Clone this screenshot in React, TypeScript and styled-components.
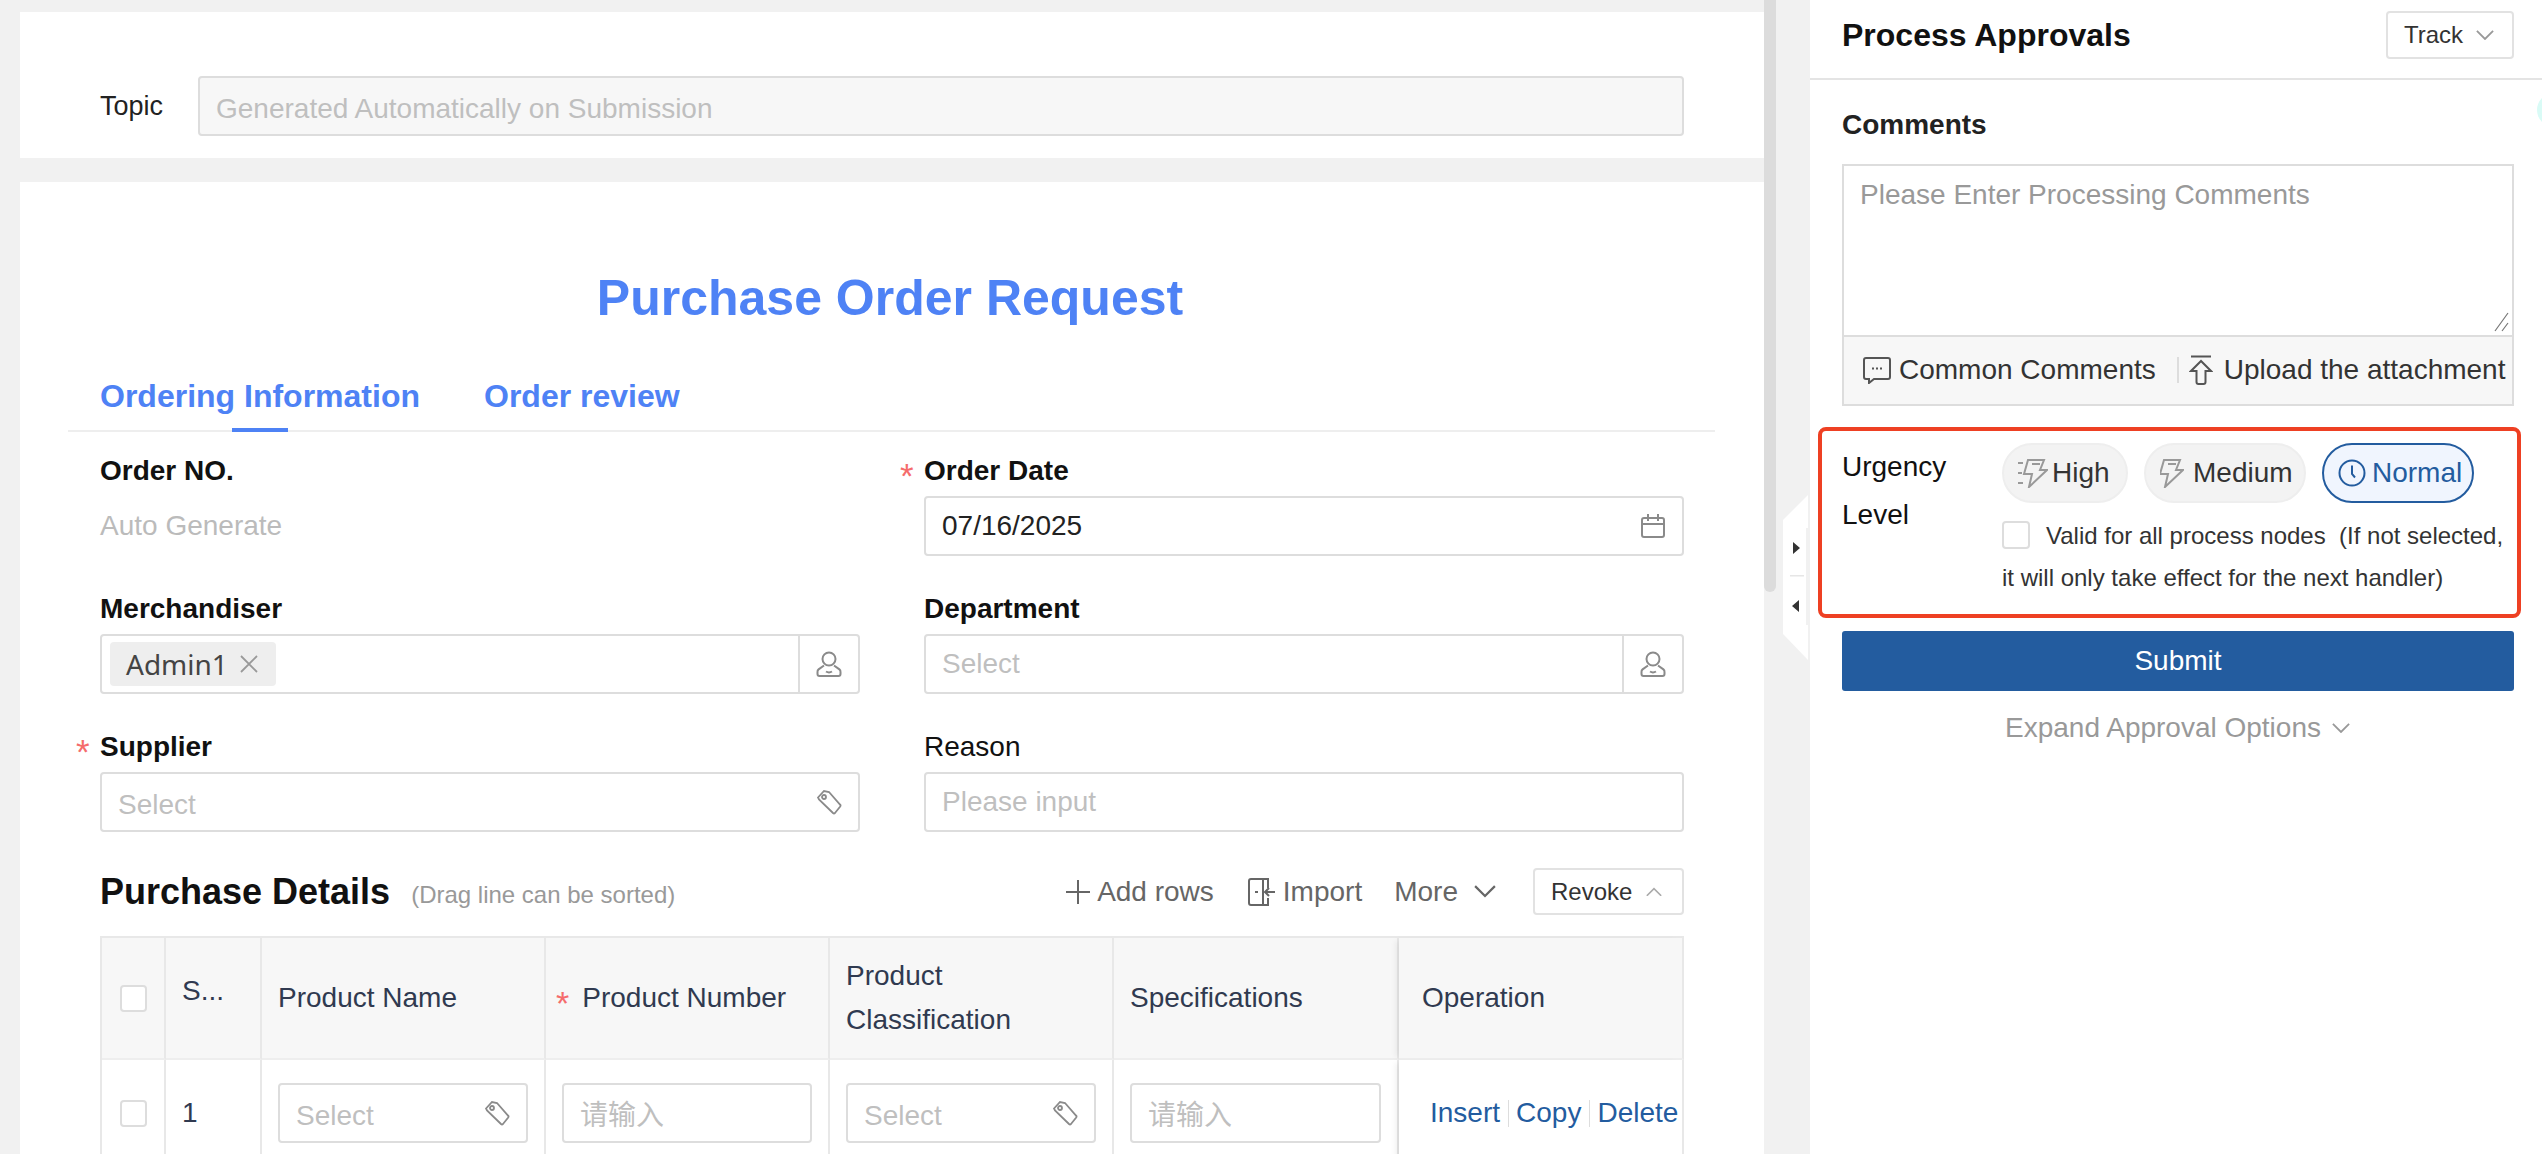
import React from 'react'
import styled, { createGlobalStyle } from 'styled-components'

const Global = createGlobalStyle`
  html, body { margin: 0; padding: 0; height: 100%; overflow: hidden; background: #fff; }
  body, #root { font-family: "Liberation Sans", "Noto Sans CJK SC", Arial, sans-serif; font-size: 28px; color: #222; }
  * { box-sizing: border-box; }
`

const Page = styled.div`
  display: flex;
  width: 2542px;
  height: 1154px;
  overflow: hidden;
  position: relative;
`
const Main = styled.main`
  position: relative;
  flex: 0 0 1810px;
  height: 1154px;
  overflow: hidden;
  padding: 12px 46px 0 20px;
  background: #f1f1f1;
`
const Scrollbar = styled.div`
  position: absolute;
  left: 1764px;
  top: 0;
  width: 12px;
  height: 592px;
  background: #dcdcdc;
  border-radius: 0 0 6px 6px;
`
const CollapseHandle = styled.svg`
  position: absolute;
  left: 1783px;
  top: 495px;
`
const TopicCard = styled.section`
  display: flex;
  align-items: flex-start;
  height: 146px;
  padding: 64px 80px 0 80px;
  background: #fff;
`
const TopicLabel = styled.label`
  flex: 0 0 98px;
  height: 60px;
  line-height: 60px;
  font-size: 27px;
  color: #222;
`
const FormCard = styled.section`
  margin-top: 24px;
  min-height: 1100px;
  padding-top: 86px;
  background: #fff;
`
const Title = styled.h1`
  margin: 0;
  padding-right: 4px;
  height: 60px;
  line-height: 60px;
  text-align: center;
  font-size: 50px;
  font-weight: 700;
  color: #4e82f5;
`
const Tabs = styled.div`
  display: flex;
  gap: 64px;
  height: 70px;
  margin: 34px 49px 0 48px;
  padding-left: 32px;
  border-bottom: 2px solid #eee;
`
const Tab = styled.div<{ $active?: boolean }>`
  position: relative;
  height: 68px;
  line-height: 68px;
  font-size: 32px;
  font-weight: 700;
  color: #4e82f5;
  &::after {
    content: '';
    display: ${p => (p.$active ? 'block' : 'none')};
    position: absolute;
    left: 50%;
    bottom: -2px;
    width: 56px;
    height: 4px;
    margin-left: -28px;
    background: #4e82f5;
  }
`
const FormBody = styled.div`
  width: 1584px;
  margin: 17px 0 0 80px;
`
const FormGrid = styled.div`
  display: grid;
  grid-template-columns: 760px 760px;
  column-gap: 64px;
  grid-auto-rows: 138px;
`
const FormItem = styled.div`
  position: relative;
`
const Label = styled.div<{ $plain?: boolean }>`
  position: relative;
  height: 40px;
  line-height: 43px;
  margin-bottom: 7px;
  font-weight: ${p => (p.$plain ? 400 : 700)};
  color: #111;
`
const Star = styled.span`
  position: absolute;
  left: -24px;
  top: 5px;
  font-size: 35px;
  font-weight: 400;
  color: #f56c6c;
`
const Field = styled.div<{ $disabled?: boolean; $flex?: boolean }>`
  display: flex;
  align-items: center;
  justify-content: space-between;
  flex: ${p => (p.$flex ? 1 : 'none')};
  height: 60px;
  padding: 0 16px;
  border: 2px solid #ddd;
  border-radius: 4px;
  background: ${p => (p.$disabled ? '#f7f7f7' : '#fff')};
  color: #222;
`
const Placeholder = styled.span<{ $low?: boolean }>`
  position: relative;
  top: ${p => (p.$low ? 3 : 0)}px;
  color: #bfbfbf;
`
const StaticValue = styled.div`
  height: 60px;
  line-height: 60px;
  color: #bbb;
`
const PickerField = styled(Field)`
  padding: 0;
`
const PickerBody = styled.div`
  display: flex;
  align-items: center;
  flex: 1;
  height: 100%;
  padding: 0 16px;
`
const PickerButton = styled.div`
  display: flex;
  align-items: center;
  justify-content: center;
  flex: 0 0 60px;
  height: 100%;
  border-left: 2px solid #ddd;
`
const UserTag = styled.span`
  display: inline-flex;
  align-items: center;
  gap: 12px;
  height: 44px;
  margin-left: -8px;
  padding: 0 18px 0 16px;
  border-radius: 4px;
  background: #eee;
  font-family: "Noto Sans", sans-serif;
  font-size: 28px;
  color: #444;
`
const SectionHead = styled.div`
  display: flex;
  align-items: center;
  height: 47px;
  margin-top: 5px;
`
const SectionTitle = styled.h2`
  margin: 0;
  font-size: 36px;
  font-weight: 700;
  color: #111;
`
const SectionNote = styled.span`
  margin: 6px 0 0 21px;
  font-size: 24px;
  color: #999;
`
const Toolbar = styled.div`
  display: flex;
  align-items: center;
  margin-left: auto;
`
const ToolAction = styled.span<{ $gap: number; $inner?: number }>`
  display: inline-flex;
  align-items: center;
  gap: ${p => p.$inner ?? 7}px;
  margin-right: ${p => p.$gap}px;
  color: #666;
`
const OutlineButton = styled.button<{ $width?: number }>`
  display: inline-flex;
  align-items: center;
  justify-content: space-between;
  width: ${p => (p.$width ? `${p.$width}px` : 'auto')};
  height: 47px;
  padding: 0 20px 0 16px;
  border: 2px solid #e2e2e2;
  border-radius: 4px;
  background: #fff;
  font: inherit;
  font-size: 24px;
  color: #333;
`
const Table = styled.div`
  display: grid;
  grid-template-columns: 64px 96px 284px 284px 284px 285px 285px;
  grid-template-rows: 122px 108px;
  margin-top: 21px;
  border-top: 2px solid #e8e8e8;
  border-left: 2px solid #e8e8e8;
`
const Cell = styled.div<{ $head?: boolean; $center?: boolean; $fixed?: boolean; $raised?: boolean }>`
  display: flex;
  align-items: center;
  justify-content: ${p => (p.$center ? 'center' : 'flex-start')};
  padding: ${p => (p.$center ? '0' : p.$fixed ? '0 0 0 23px' : '0 16px')};
  padding-bottom: ${p => (p.$raised ? '14px' : undefined)};
  border-right: 2px solid #e8e8e8;
  border-bottom: 2px solid #eee;
  background: ${p => (p.$head ? '#f7f7f7' : '#fff')};
  color: #303a50;
  line-height: 44px;
  box-shadow: ${p => (p.$fixed ? '-6px 0 6px -3px rgba(0,0,0,.07)' : 'none')};
`
const RowStar = styled.span`
  margin: 10px 13px 0 -6px;
  color: #f56c6c;
  font-size: 34px;
`
const CellField = styled(Field)`
  width: 100%;
`
const OpRow = styled.div`
  display: flex;
  align-items: center;
  padding-left: 8px;
`
const OpLink = styled.a`
  color: #235c9f;
`
const OpDivider = styled.span`
  width: 1px;
  height: 27px;
  margin: 0 7px 0 8px;
  background: #ddd;
`
const Checkbox = styled.span`
  display: inline-block;
  width: 27px;
  height: 27px;
  border: 2px solid #ddd;
  border-radius: 4px;
  background: #fff;
`

const Aside = styled.aside`
  position: relative;
  flex: 1;
  height: 1154px;
  background: #fff;
`
const PanelHead = styled.header`
  display: flex;
  align-items: center;
  justify-content: space-between;
  height: 80px;
  padding: 0 28px 8px 32px;
  border-bottom: 2px solid #e4e4e4;
`
const PanelTitle = styled.h2`
  margin: 0;
  font-size: 32px;
  font-weight: 700;
  color: #111;
`
const TrackButton = styled(OutlineButton)`
  width: 128px;
  height: 48px;
  padding: 0 18px 0 16px;
`
const PanelBody = styled.div`
  padding: 25px 28px 0 32px;
`
const CommentsLabel = styled.div`
  height: 40px;
  line-height: 40px;
  margin-bottom: 19px;
  font-weight: 700;
  color: #222;
`
const CommentBox = styled.div`
  height: 242px;
  border: 2px solid #ddd;
`
const CommentInput = styled.div`
  position: relative;
  height: 169px;
  padding: 9px 16px;
  color: #999;
  line-height: 40px;
`
const ResizeGrip = styled.svg`
  position: absolute;
  right: 2px;
  bottom: 2px;
`
const CommentTools = styled.div`
  display: flex;
  align-items: center;
  height: 69px;
  padding: 0 0 2px 19px;
  border-top: 2px solid #ddd;
  background: #f7f7f7;
  color: #333;
`
const CommentTool = styled.span`
  display: inline-flex;
  align-items: center;
  gap: 8px;
`
const ToolDivider = styled.span`
  width: 2px;
  height: 26px;
  margin: 0 10px 0 21px;
  background: #ddd;
`
const UploadTool = styled(CommentTool)`
  gap: 11px;
`
const UrgencyRow = styled.div`
  display: flex;
  margin-top: 37px;
`
const UrgencyLabel = styled.div`
  flex: 0 0 160px;
  width: 160px;
  padding-right: 60px;
  line-height: 48px;
  color: #111;
`
const UrgencyOptions = styled.div`
  flex: 1;
  min-width: 0;
`
const Chips = styled.div`
  display: flex;
  gap: 16px;
`
const Chip = styled.span<{ $active?: boolean; $width: number; $gap: number }>`
  display: inline-flex;
  align-items: center;
  gap: ${p => p.$gap}px;
  width: ${p => p.$width}px;
  height: 60px;
  padding-left: 14px;
  border: 2px solid ${p => (p.$active ? '#235c9f' : '#eee')};
  border-radius: 30px;
  background: ${p => (p.$active ? '#f0f5fe' : '#f3f3f3')};
  color: ${p => (p.$active ? '#235c9f' : '#333')};
`
const ScopeNote = styled.div`
  margin-top: 12px;
  font-size: 24px;
  line-height: 42px;
  color: #333;
  white-space: nowrap;
`
const ScopeCheck = styled(Checkbox)`
  width: 28px;
  height: 28px;
  margin-right: 16px;
  vertical-align: middle;
  position: relative;
  top: -3px;
`
const SubmitButton = styled.button`
  display: block;
  width: 100%;
  height: 60px;
  margin-top: 32px;
  border: 0;
  border-radius: 3px;
  background: #235c9f;
  color: #fff;
  font: inherit;
`
const ExpandLink = styled.div`
  display: flex;
  align-items: center;
  justify-content: center;
  gap: 11px;
  height: 40px;
  margin-top: 17px;
  padding-right: 1px;
  color: #999;
`
const Highlight = styled.div`
  position: absolute;
  left: 8px;
  top: 427px;
  width: 703px;
  height: 191px;
  border: 4px solid #ee4023;
  border-radius: 8px;
  pointer-events: none;
`
const Bubble = styled.div`
  position: absolute;
  right: -29px;
  top: 93px;
  width: 34px;
  height: 34px;
  border-radius: 50%;
  background: #d9fbf6;
`

const CalendarIcon = () => (
  <svg width="26" height="26" viewBox="0 0 26 26" fill="none" stroke="#8a8a8a" strokeWidth="2">
    <rect x="2" y="5" width="22" height="19" rx="2" />
    <path d="M2 11h22M8 1v7M18 1v7" />
  </svg>
)
const UserIcon = () => (
  <svg width="26" height="26" viewBox="0 0 26 26" fill="none" stroke="#8a8a8a" strokeWidth="2">
    <circle cx="13" cy="8" r="6.5" />
    <path d="M8 14.5 2.6 18.4A3 3 0 0 0 1.5 21v2a2 2 0 0 0 2 2h19a2 2 0 0 0 2-2v-2a3 3 0 0 0-1.1-2.600L18 14.500M10 20.500c2 1.300 4 1.300 6 0" />
  </svg>
)
const TagIcon = () => (
  <svg width="26" height="26" viewBox="0 0 26 26" fill="none" stroke="#8a8a8a" strokeWidth="1.800">
    <path d="M2 8.500 8 2l5 1 11 12.500a1.500 1.500 0 0 1 .200 2L19 24a1.500 1.500 0 0 1-2 0L3 10.500z" />
    <circle cx="8" cy="8" r="2" />
  </svg>
)
const Chevron = ({ up, size = 18, color = '#888' }: { up?: boolean; size?: number; color?: string }) => (
  <svg width={size} height={size * 0.6} viewBox="0 0 20 12" fill="none" stroke={color} strokeWidth="2">
    <path d={up ? 'M1 11 10 2l9 9' : 'M1 1l9 9 9-9'} />
  </svg>
)
const PlusIcon = () => (
  <svg width="24" height="24" viewBox="0 0 24 24" stroke="#666" strokeWidth="2">
    <path d="M0 12h24M12 0v24" />
  </svg>
)
const ImportIcon = () => (
  <svg width="28" height="30" viewBox="0 0 28 30" fill="none" stroke="#666" strokeWidth="2">
    <path d="M15 2H3a2 2 0 0 0-2 2v22a2 2 0 0 0 2 2h12zM15 2h5v9M20 21v7h-5M7 15h3M27 15H17M21 11l-4 4 4 4" />
  </svg>
)
const ChatIcon = () => (
  <svg width="28" height="28" viewBox="0 0 28 28" fill="none" stroke="#555" strokeWidth="2">
    <path d="M3 2h22a2 2 0 0 1 2 2v17a2 2 0 0 1-2 2H11l-5 4v-4H3a2 2 0 0 1-2-2V4a2 2 0 0 1 2-2z" />
    <path d="M9 12.500h2M13 12.500h2M17 12.500h2" />
  </svg>
)
const UploadIcon = () => (
  <svg width="24" height="30" viewBox="0 0 24 30" fill="none" stroke="#555" strokeWidth="2">
    <path d="M2 1.500h20M12 6 2 16h5.500v11a2 2 0 0 0 2 2h5a2 2 0 0 0 2-2V16H22z" />
  </svg>
)
const BoltIcon = ({ dashes }: { dashes?: boolean }) => (
  <svg width={dashes ? 30 : 24} height="29" viewBox={dashes ? '-6 0 30 29' : '0 0 24 29'} fill="none" stroke="#999" strokeWidth="2">
    <path d="M4 1h16l-4 10h7L5 28l3-13H0zM8 5h8" />
    {dashes && <path d="M-6 4h5M-6 14h4M-6 24h5" />}
  </svg>
)
const ClockIcon = () => (
  <svg width="28" height="28" viewBox="0 0 28 28" fill="none" stroke="#235c9f" strokeWidth="2">
    <circle cx="14" cy="14" r="12.500" />
    <path d="M14 6.500V15l3 3.500" />
  </svg>
)

export default function App() {
  return (
    <Page>
      <Global />
      <Main>
        <TopicCard>
          <TopicLabel>Topic</TopicLabel>
          <Field $disabled $flex>
            <Placeholder $low>Generated Automatically on Submission</Placeholder>
          </Field>
        </TopicCard>

        <FormCard>
          <Title>Purchase Order Request</Title>
          <Tabs>
            <Tab $active>Ordering Information</Tab>
            <Tab>Order review</Tab>
          </Tabs>

          <FormBody>
            <FormGrid>
              <FormItem>
                <Label>Order NO.</Label>
                <StaticValue>Auto Generate</StaticValue>
              </FormItem>
              <FormItem>
                <Label><Star>*</Star>Order Date</Label>
                <Field>07/16/2025<CalendarIcon /></Field>
              </FormItem>
              <FormItem>
                <Label>Merchandiser</Label>
                <PickerField>
                  <PickerBody>
                    <UserTag>
                      Admin1
                      <svg width="18" height="18" viewBox="0 0 18 18" stroke="#999" strokeWidth="1.800">
                        <path d="M1 1l16 16M17 1 1 17" />
                      </svg>
                    </UserTag>
                  </PickerBody>
                  <PickerButton><UserIcon /></PickerButton>
                </PickerField>
              </FormItem>
              <FormItem>
                <Label>Department</Label>
                <PickerField>
                  <PickerBody><Placeholder>Select</Placeholder></PickerBody>
                  <PickerButton><UserIcon /></PickerButton>
                </PickerField>
              </FormItem>
              <FormItem>
                <Label><Star>*</Star>Supplier</Label>
                <Field><Placeholder $low>Select</Placeholder><TagIcon /></Field>
              </FormItem>
              <FormItem>
                <Label $plain>Reason</Label>
                <Field><Placeholder>Please input</Placeholder></Field>
              </FormItem>
            </FormGrid>

            <SectionHead>
              <SectionTitle>Purchase Details</SectionTitle>
              <SectionNote>(Drag line can be sorted)</SectionNote>
              <Toolbar>
                <ToolAction $gap={34}><PlusIcon />Add rows</ToolAction>
                <ToolAction $gap={32}><ImportIcon />Import</ToolAction>
                <ToolAction $gap={37} $inner={16}>More<Chevron size={22} color="#666" /></ToolAction>
                <OutlineButton $width={151}>Revoke<Chevron up size={16} color="#aaa" /></OutlineButton>
              </Toolbar>
            </SectionHead>

            <Table>
              <Cell $head $center><Checkbox /></Cell>
              <Cell $head $raised>S...</Cell>
              <Cell $head>Product Name</Cell>
              <Cell $head><RowStar>*</RowStar>Product Number</Cell>
              <Cell $head>Product<br />Classification</Cell>
              <Cell $head>Specifications</Cell>
              <Cell $head $fixed>Operation</Cell>

              <Cell $center><Checkbox /></Cell>
              <Cell>1</Cell>
              <Cell><CellField><Placeholder $low>Select</Placeholder><TagIcon /></CellField></Cell>
              <Cell><CellField><Placeholder $low>请输入</Placeholder></CellField></Cell>
              <Cell><CellField><Placeholder $low>Select</Placeholder><TagIcon /></CellField></Cell>
              <Cell><CellField><Placeholder $low>请输入</Placeholder></CellField></Cell>
              <Cell $fixed>
                <OpRow>
                  <OpLink>Insert</OpLink><OpDivider />
                  <OpLink>Copy</OpLink><OpDivider />
                  <OpLink>Delete</OpLink>
                </OpRow>
              </Cell>
            </Table>
          </FormBody>
        </FormCard>

        <Scrollbar />
        <CollapseHandle width="27" height="165" viewBox="0 0 27 165">
          <path d="M25 0 0 25v114l25 26z" fill="#fff" />
          <rect x="23" y="33" width="2" height="97" fill="#f1f1f1" />
          <path d="M10 47l7 6-7 6zM16 105l-7 6 7 6z" fill="#333" />
          <rect x="7" y="80" width="14" height="1.500" fill="#e6e6e6" />
        </CollapseHandle>
      </Main>

      <Aside>
        <PanelHead>
          <PanelTitle>Process Approvals</PanelTitle>
          <TrackButton>Track<Chevron size={18} color="#999" /></TrackButton>
        </PanelHead>
        <PanelBody>
          <CommentsLabel>Comments</CommentsLabel>
          <CommentBox>
            <CommentInput>
              Please Enter Processing Comments
              <ResizeGrip width="16" height="22" viewBox="0 0 16 22" stroke="#777" strokeWidth="1.200">
                <path d="M1 20 14 2M8 20l6-8" />
              </ResizeGrip>
            </CommentInput>
            <CommentTools>
              <CommentTool><ChatIcon />Common Comments</CommentTool>
              <ToolDivider />
              <UploadTool><UploadIcon />Upload the attachment</UploadTool>
            </CommentTools>
          </CommentBox>

          <UrgencyRow>
            <UrgencyLabel>Urgency Level</UrgencyLabel>
            <UrgencyOptions>
              <Chips>
                <Chip $width={126} $gap={4}><BoltIcon dashes />High</Chip>
                <Chip $width={162} $gap={9}><BoltIcon />Medium</Chip>
                <Chip $active $width={152} $gap={6}><ClockIcon />Normal</Chip>
              </Chips>
              <ScopeNote>
                <ScopeCheck />Valid for all process nodes &nbsp;(If not selected,<br />
                it will only take effect for the next handler)
              </ScopeNote>
            </UrgencyOptions>
          </UrgencyRow>

          <SubmitButton>Submit</SubmitButton>
          <ExpandLink>Expand Approval Options<Chevron size={18} color="#999" /></ExpandLink>
        </PanelBody>
        <Highlight />
        <Bubble />
      </Aside>
    </Page>
  )
}
